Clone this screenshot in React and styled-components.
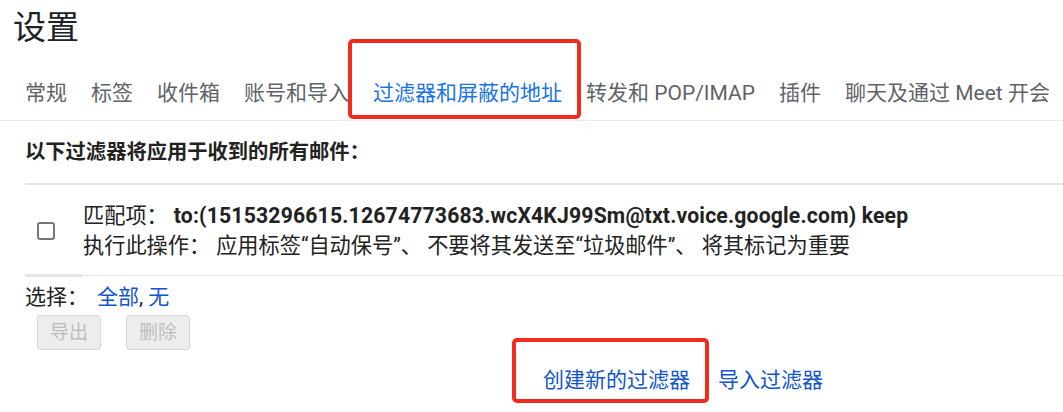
import styled, { createGlobalStyle } from "styled-components";

const GlobalStyle = createGlobalStyle`
  html, body {
    margin: 0;
    padding: 0;
    background: #fff;
  }
  body {
    font-family: "Roboto", "Noto Sans CJK SC", sans-serif;
    color: #222;
  }
`;

const Page = styled.div`
  position: relative;
  width: 1063px;
  height: 412px;
  overflow: hidden;
  background: #fff;
`;

const Title = styled.h1`
  margin: 0;
  padding: 7px 0 0 13px;
  font-size: 33px;
  font-weight: 400;
  line-height: 42px;
  color: #202124;
`;

const TabBar = styled.div`
  display: flex;
  align-items: center;
  height: 54px;
  margin-top: 17px;
  padding-left: 13px;
  border-bottom: 1px solid #ececec;
  white-space: nowrap;
`;

const Tab = styled.div`
  padding: 0 12px;
  font-size: 21px;
  line-height: 26px;
  color: ${(p) => (p.$active ? "#1a73e8" : "#5f6368")};
  flex: none;
`;

const Section = styled.div`
  padding-left: 25px;
`;

const Heading = styled.div`
  padding-top: 18px;
  height: 44px;
  font-size: 20.3px;
  font-weight: 700;
  line-height: 26px;
  color: #222;
`;

const FilterTable = styled.div`
  border-top: 2px solid #e5e5e5;
`;

const FilterRow = styled.div`
  display: flex;
  align-items: center;
  height: 90px;
  position: relative;
  border-bottom: 1px solid #e5e5e5;

  &::after {
    content: "";
    position: absolute;
    left: 0;
    bottom: -2px;
    width: 57px;
    height: 3px;
    background: #e5e5e5;
  }
`;

const CheckCell = styled.div`
  width: 58px;
  display: flex;
  padding-left: 12px;
  box-sizing: border-box;
  margin-top: 2px;
`;

const Checkbox = styled.span`
  display: block;
  width: 14px;
  height: 14px;
  border: 2px solid #767676;
  border-radius: 3px;
`;

const FilterText = styled.div`
  font-size: 21.2px;
  line-height: 30px;
  color: #222;
  margin-top: 2px;
`;

const Line = styled.div`
  display: flex;
  white-space: nowrap;
`;

const Label = styled.span`
  margin-right: ${(p) => p.$gap}px;
`;

const Criteria = styled.span`
  font-weight: 700;
  letter-spacing: 0.17px;
`;

const SelectRow = styled.div`
  display: flex;
  padding-top: 7px;
  font-size: 21px;
  line-height: 28px;
  color: #222;
  white-space: pre;
`;

const Link = styled.a`
  color: #15c;
  text-decoration: none;
  cursor: pointer;
`;

const ButtonRow = styled.div`
  display: flex;
  gap: 25px;
  padding: 4px 0 0 12px;
`;

const GrayButton = styled.button`
  width: 64px;
  height: 35px;
  padding: 0;
  border: 1px solid #d6d6d6;
  border-radius: 4px;
  background: #ededed;
  color: #bdbdbd;
  font-family: inherit;
  font-size: 19px;
  line-height: 33px;
`;

const ActionRow = styled.div`
  display: flex;
  gap: 28px;
  padding: 17px 0 0 543px;
  font-size: 21px;
  line-height: 26px;
`;

const Annotation = styled.div`
  position: absolute;
  left: ${(p) => p.$x}px;
  top: ${(p) => p.$y}px;
  width: ${(p) => p.$w}px;
  height: ${(p) => p.$h}px;
  box-sizing: border-box;
  border: 4px solid #f42a1e;
  border-radius: 5px;
  pointer-events: none;
`;

const tabs = [
  "常规",
  "标签",
  "收件箱",
  "账号和导入",
  "过滤器和屏蔽的地址",
  "转发和 POP/IMAP",
  "插件",
  "聊天及通过 Meet 开会",
];

export default function App() {
  return (
    <Page>
      <GlobalStyle />
      <Title>设置</Title>
      <TabBar>
        {tabs.map((t) => (
          <Tab key={t} $active={t === "过滤器和屏蔽的地址"}>
            {t}
          </Tab>
        ))}
      </TabBar>
      <Section>
        <Heading>以下过滤器将应用于收到的所有邮件：</Heading>
        <FilterTable>
          <FilterRow>
            <CheckCell>
              <Checkbox />
            </CheckCell>
            <FilterText>
              <Line>
                <Label $gap={6}>匹配项：</Label>
                <Criteria>
                  to:(15153296615.12674773683.wcX4KJ99Sm@txt.voice.google.com) keep
                </Criteria>
              </Line>
              <Line>
                <Label $gap={6}>执行此操作：</Label>
                <span>应用标签“自动保号”、 不要将其发送至“垃圾邮件”、 将其标记为重要</span>
              </Line>
            </FilterText>
          </FilterRow>
        </FilterTable>
        <SelectRow>
          <Label $gap={9}>选择：</Label>
          <Link>全部</Link>, <Link>无</Link>
        </SelectRow>
        <ButtonRow>
          <GrayButton disabled>导出</GrayButton>
          <GrayButton disabled>删除</GrayButton>
        </ButtonRow>
      </Section>
      <ActionRow>
        <Link>创建新的过滤器</Link>
        <Link>导入过滤器</Link>
      </ActionRow>
      <Annotation $x={348} $y={39} $w={233} $h={80} />
      <Annotation $x={512} $y={338} $w={197} $h={65} />
    </Page>
  );
}
